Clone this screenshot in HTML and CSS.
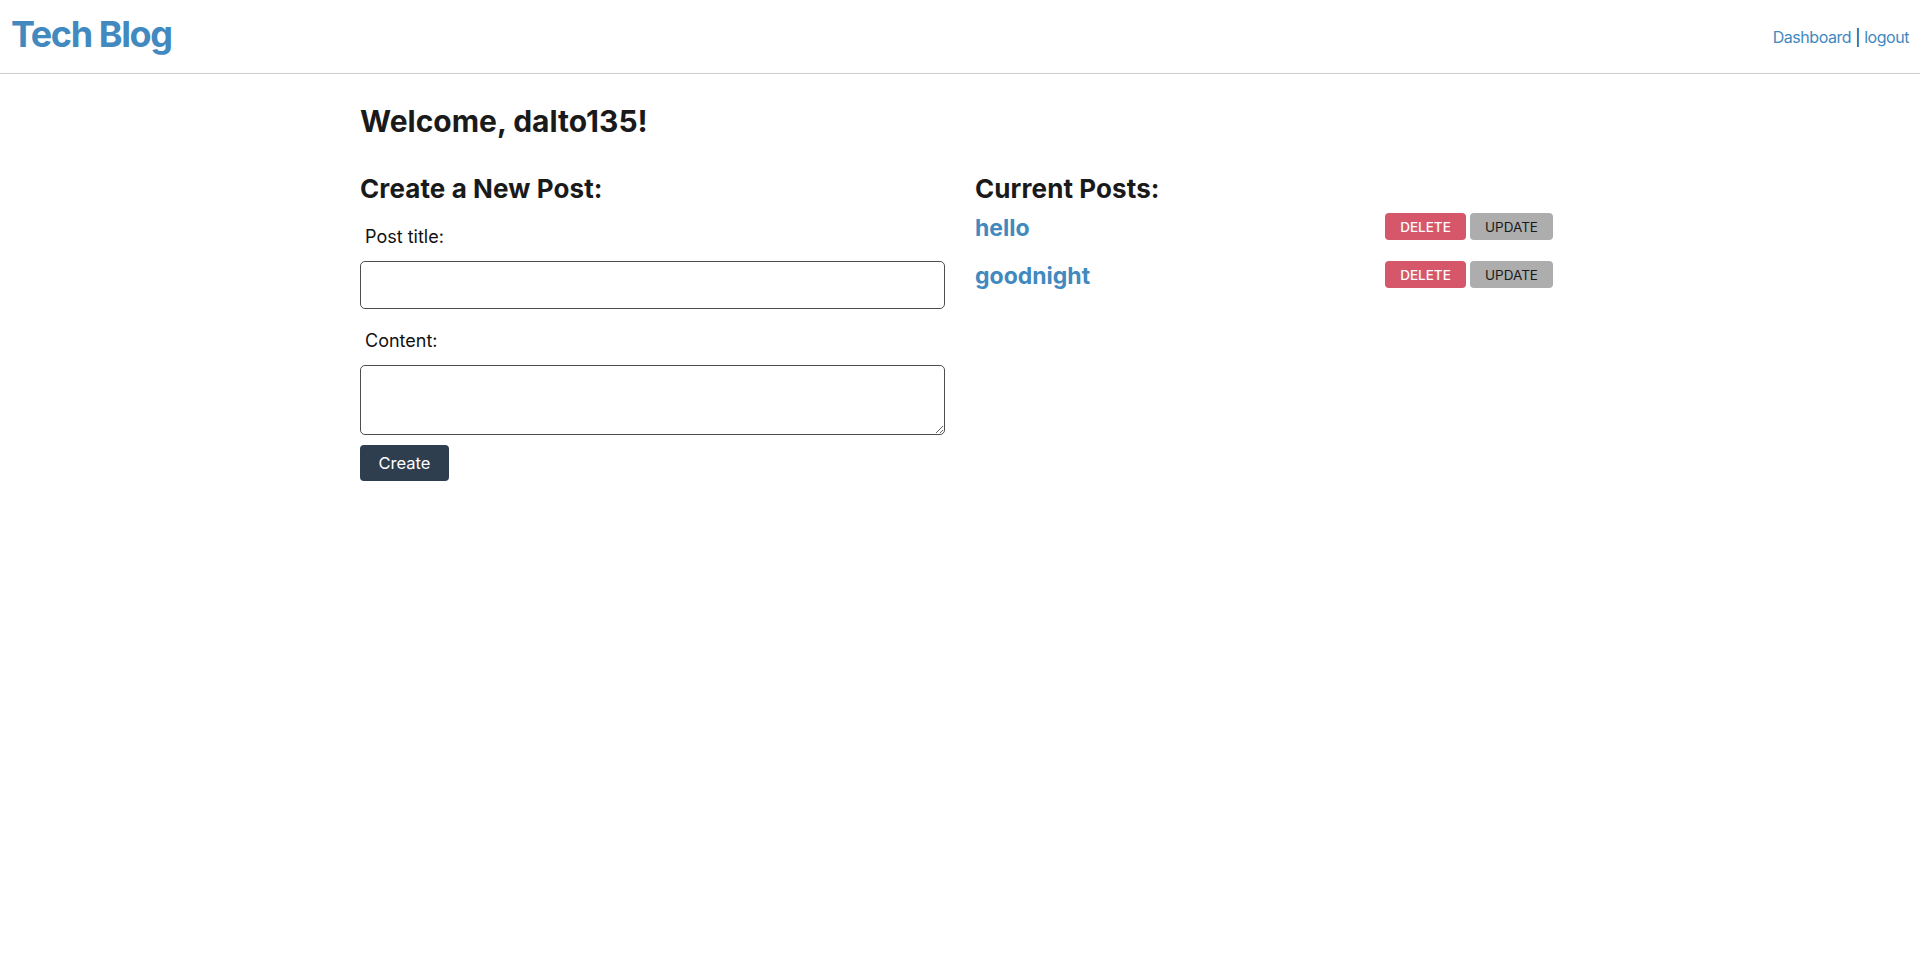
FILE: index.html
```html
<!DOCTYPE html>
<html lang="en">
<head>
<meta charset="utf-8">
<title>Tech Blog</title>
<link rel="stylesheet" href="styles.css">
</head>
<body>
<header class="site-header">
  <h1 class="brand">Tech Blog</h1>
  <nav class="nav">
    <a href="#" class="nav-link">Dashboard</a> | <a href="#" class="nav-link">logout</a>
  </nav>
</header>
<main class="container">
  <h2 class="welcome">Welcome, dalto135!</h2>
  <div class="columns">
    <section class="col">
      <h3 class="section-title">Create a New Post:</h3>
      <form class="post-form">
        <label class="field-label" for="title">Post title:</label>
        <input class="field-input" id="title" type="text">
        <label class="field-label field-label-next" for="content">Content:</label>
        <textarea class="field-textarea" id="content"></textarea>
        <button type="button" class="btn-create">Create</button>
      </form>
    </section>
    <section class="col">
      <h3 class="section-title">Current Posts:</h3>
      <ul class="post-list">
        <li class="post-row">
          <a href="#" class="post-title">hello</a>
          <div class="post-actions">
            <button type="button" class="btn-small btn-delete">DELETE</button>
            <button type="button" class="btn-small btn-update">UPDATE</button>
          </div>
        </li>
        <li class="post-row">
          <a href="#" class="post-title">goodnight</a>
          <div class="post-actions">
            <button type="button" class="btn-small btn-delete">DELETE</button>
            <button type="button" class="btn-small btn-update">UPDATE</button>
          </div>
        </li>
      </ul>
    </section>
  </div>
</main>
</body>
</html>
```

FILE: styles.css
```css
* { box-sizing: border-box; }
body {
  margin: 0;
  font-family: Inter, "Noto Sans", sans-serif;
  color: #1a1a1a;
  background: #fff;
}
.site-header {
  display: flex;
  justify-content: space-between;
  align-items: flex-start;
  height: 74px;
  padding: 0 11px;
  border-bottom: 1px solid #cdcdcd;
}
.brand {
  margin: 16px 0 0;
  font-size: 36px;
  font-weight: 700;
  color: #4189bf;
  letter-spacing: -1.4px;
  line-height: 36px;
}
.nav {
  margin-top: 27px;
  font-size: 16px;
  line-height: 20px;
  letter-spacing: -0.45px;
  color: #1a1a1a;
}
.nav-link {
  color: #4189bf;
  text-decoration: none;
}
.container {
  width: 1200px;
  margin: 0 auto;
  padding-top: 29px;
}
.welcome {
  margin: 0;
  font-size: 30px;
  font-weight: 700;
  line-height: 36px;
}
.columns {
  display: grid;
  grid-template-columns: 1fr 1fr;
  column-gap: 30px;
  margin-top: 34px;
}
.section-title {
  margin: 0;
  font-size: 26px;
  font-weight: 700;
  line-height: 32px;
  letter-spacing: 0.1px;
}
.post-form {
  display: flex;
  flex-direction: column;
  align-items: flex-start;
  margin-top: 20px;
}
.field-label {
  font-size: 18px;
  line-height: 24px;
  color: #111;
  padding-left: 5px;
}
.field-label-next { margin-top: 20px; }
.field-input {
  display: block;
  width: 100%;
  height: 48px;
  margin-top: 12px;
  border: 1px solid #4d4d4d;
  border-radius: 5px;
  font: inherit;
}
.field-textarea {
  display: block;
  width: 100%;
  height: 70px;
  margin-top: 12px;
  border: 1px solid #4d4d4d;
  border-radius: 5px;
  font: inherit;
}
.btn-create {
  margin-top: 10px;
  width: 89px;
  height: 36px;
  padding: 0;
  background: #2f3e4f;
  color: #fff;
  border: none;
  border-radius: 4px;
  font-family: Inter, sans-serif;
  font-size: 16.5px;
}
.post-list {
  list-style: none;
  margin: 8px 0 0;
  padding: 0 7px 0 0;
}
.post-row {
  display: flex;
  justify-content: space-between;
  align-items: flex-start;
  height: 27px;
}
.post-row + .post-row { margin-top: 21px; }
.post-title {
  margin-top: 2px;
  color: #4189bf;
  font-weight: 700;
  font-size: 23px;
  line-height: 27px;
  text-decoration: none;
}
.post-actions {
  display: flex;
  gap: 4px;
}
.btn-small {
  height: 27px;
  padding: 0;
  border: none;
  border-radius: 4px;
  font-family: Inter, sans-serif;
  font-size: 13.5px;
  font-weight: 500;
}
.btn-delete {
  width: 81px;
  background: #d6566a;
  color: #fff;
}
.btn-update {
  width: 83px;
  background: #adadad;
  color: #1a1a1a;
  font-weight: 400;
}
```
